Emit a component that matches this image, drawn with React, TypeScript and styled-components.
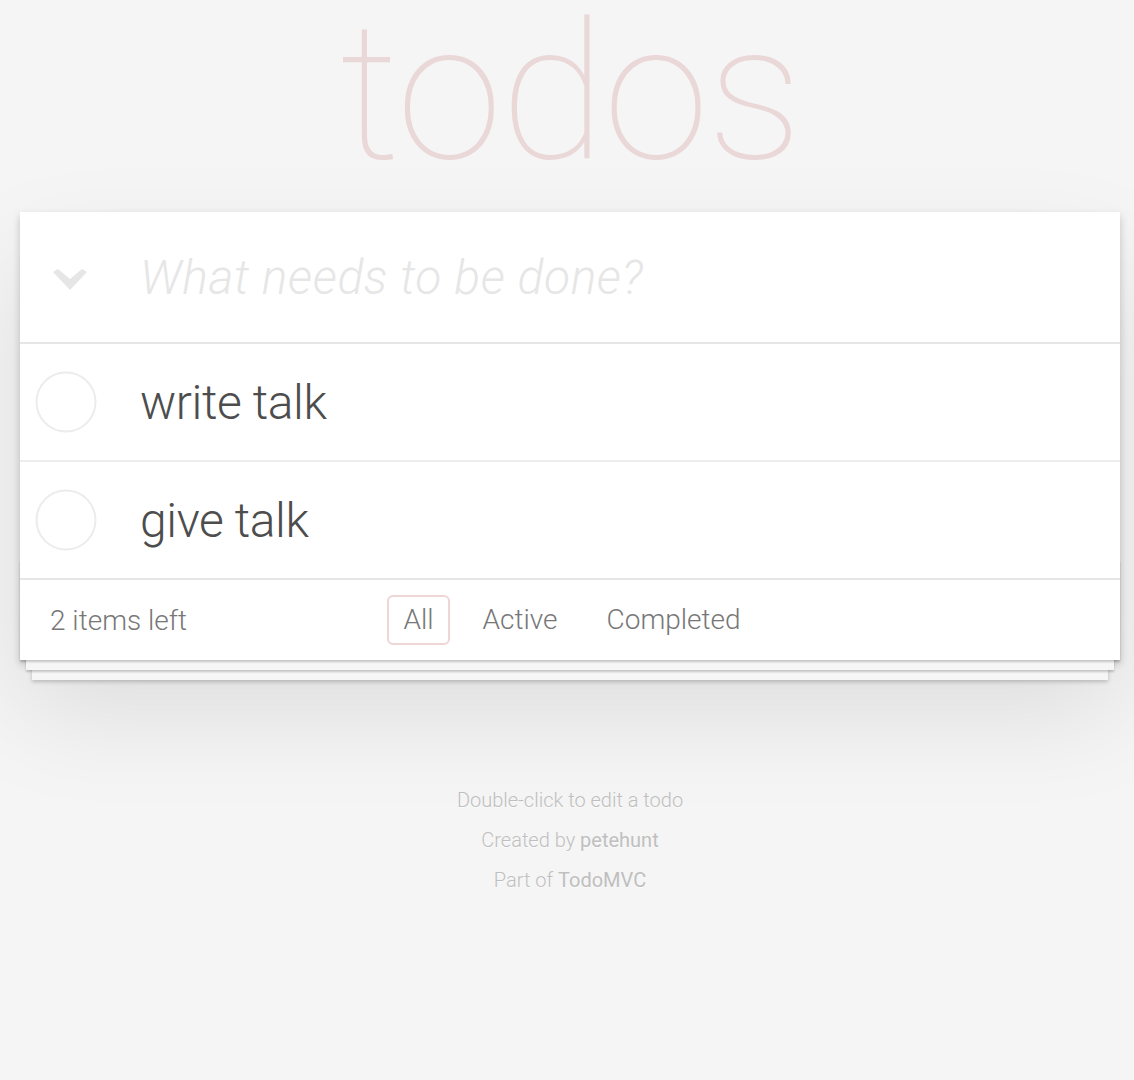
import React from "react";
import styled, { createGlobalStyle } from "styled-components";

const GlobalStyle = createGlobalStyle`
  html, body {
    margin: 0;
    padding: 0;
    background: #f5f5f5;
  }
  body {
    font-family: "Helvetica Neue", Roboto, "Liberation Sans", Arial, sans-serif;
    font-weight: 300;
    color: #4d4d4d;
    -webkit-font-smoothing: antialiased;
  }
`;

const Page = styled.div`
  width: 1100px;
  margin-left: 20px;
  padding-top: 1px;
  padding-bottom: 80px;
`;

const Title = styled.h1`
  margin: 0;
  height: 184px;
  line-height: 184px;
  font-size: 192px;
  font-weight: 100;
  text-align: center;
  color: rgba(175, 47, 47, 0.15);
  text-rendering: optimizeLegibility;
  letter-spacing: -2px;
`;

const App = styled.section`
  margin-top: 27px;
  background: #fff;
  position: relative;
  box-shadow: 0 4px 8px 0 rgba(0, 0, 0, 0.2), 0 50px 100px 0 rgba(0, 0, 0, 0.1);
`;

const Header = styled.header`
  height: 130px;
  display: flex;
  align-items: center;
`;

const ToggleAll = styled.div`
  width: 120px;
  height: 130px;
  display: flex;
  align-items: center;
  justify-content: flex-start;
  padding-left: 33px;
  padding-top: 6px;
  box-sizing: border-box;
  flex: none;
`;

const NewTodo = styled.input`
  flex: 1;
  border: none;
  outline: none;
  background: transparent;
  padding: 0;
  margin: 0;
  height: 130px;
  font-family: inherit;
  font-weight: 300;
  font-size: 48px;
  color: #4d4d4d;
  &::placeholder {
    font-style: italic;
    font-weight: 300;
    letter-spacing: 0.6px;
    color: #e6e6e6;
  }
`;

const Main = styled.section`
  border-top: 2px solid #e6e6e6;
`;

const List = styled.ul`
  margin: 0;
  padding: 0;
  list-style: none;
`;

const Item = styled.li`
  height: 116px;
  display: flex;
  align-items: center;
  border-bottom: 2px solid #ededed;
  &:last-child {
    border-bottom: none;
  }
`;

const Toggle = styled.div`
  width: 120px;
  height: 116px;
  display: flex;
  align-items: center;
  padding-left: 15px;
  box-sizing: border-box;
  flex: none;
`;

const Label = styled.label`
  font-size: 48px;
  line-height: 1.2;
  color: #4d4d4d;
  font-weight: 300;
  padding-top: 2px;
  letter-spacing: -0.4px;
`;

const Footer = styled.footer`
  position: relative;
  height: 80px;
  border-top: 2px solid #e6e6e6;
  padding: 0 30px;
  display: grid;
  grid-template-columns: 1fr auto 1fr;
  align-items: center;
  color: #777;
  font-size: 28px;
  &::before {
    content: "";
    position: absolute;
    right: 0;
    bottom: 0;
    left: 0;
    height: 100px;
    overflow: hidden;
    box-shadow: 0 2px 2px rgba(0, 0, 0, 0.2), 0 16px 0 -6px #f6f6f6,
      0 18px 2px -6px rgba(0, 0, 0, 0.2), 0 32px 0 -12px #f6f6f6,
      0 34px 4px -12px rgba(0, 0, 0, 0.2);
    z-index: 0;
  }
`;

const FooterBody = styled.div`
  position: absolute;
  inset: 0;
  background: #fff;
  z-index: 1;
`;

const Count = styled.span`
  position: relative;
  z-index: 2;
  justify-self: start;
`;

const Filters = styled.ul`
  position: relative;
  z-index: 2;
  margin: 0;
  padding: 0;
  list-style: none;
  display: flex;
  gap: 17px;
  padding-left: 4px;
`;

const FilterLink = styled.a<{ $selected?: boolean }>`
  display: block;
  color: inherit;
  text-decoration: none;
  padding: 6px 14px;
  line-height: 34px;
  border: 2px solid ${(p) => (p.$selected ? "rgba(175, 47, 47, 0.2)" : "transparent")};
  border-radius: 6px;
`;

const Info = styled.footer`
  margin-top: 130px;
  color: #bfbfbf;
  font-size: 20px;
  text-align: center;
  text-shadow: 0 1px 0 rgba(255, 255, 255, 0.5);
  p {
    margin: 20px 0;
    line-height: 1;
  }
  a {
    color: inherit;
    text-decoration: none;
    font-weight: 400;
  }
`;

const Chevron = () => (
  <svg width="34" height="22" viewBox="0 0 34 22">
    <polygon points="0,3 5,0 17,10 29,0 34,3 17,21" fill="#e6e6e6" />
  </svg>
);

const Circle = () => (
  <svg width="62" height="62" viewBox="0 0 62 62">
    <circle cx="31" cy="31" r="29.5" fill="none" stroke="#ececec" strokeWidth="2" />
  </svg>
);

const todos = ["write talk", "give talk"];

export default function AppRoot() {
  return (
    <>
      <GlobalStyle />
      <Page>
        <Title>todos</Title>
        <App>
          <Header>
            <ToggleAll>
              <Chevron />
            </ToggleAll>
            <NewTodo placeholder="What needs to be done?" />
          </Header>
          <Main>
            <List>
              {todos.map((t) => (
                <Item key={t}>
                  <Toggle>
                    <Circle />
                  </Toggle>
                  <Label>{t}</Label>
                </Item>
              ))}
            </List>
          </Main>
          <Footer>
            <FooterBody />
            <Count>2 items left</Count>
            <Filters>
              <li>
                <FilterLink href="#/" $selected>
                  All
                </FilterLink>
              </li>
              <li>
                <FilterLink href="#/active">Active</FilterLink>
              </li>
              <li>
                <FilterLink href="#/completed">Completed</FilterLink>
              </li>
            </Filters>
            <span />
          </Footer>
        </App>
        <Info>
          <p>Double-click to edit a todo</p>
          <p>
            Created by <a href="#">petehunt</a>
          </p>
          <p>
            Part of <a href="#">TodoMVC</a>
          </p>
        </Info>
      </Page>
    </>
  );
}
